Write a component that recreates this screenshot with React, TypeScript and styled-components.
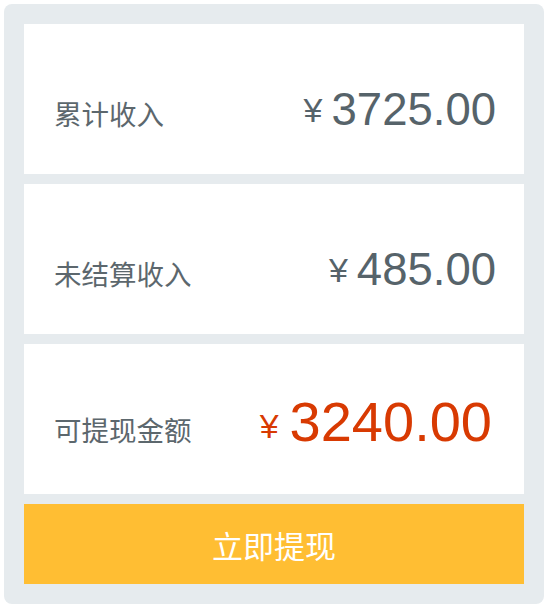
import styled, { createGlobalStyle } from 'styled-components'

const GlobalStyle = createGlobalStyle`
  html, body {
    margin: 0;
    padding: 0;
    background: #ffffff;
  }
  body {
    font-family: "Liberation Sans", "Noto Sans CJK SC", sans-serif;
  }
`

const incomes = [
  { label: '累计收入', amount: '3725.00' },
  { label: '未结算收入', amount: '485.00' },
  { label: '可提现金额', amount: '3240.00', highlight: true },
]

const App = () => {
  return (
    <>
      <GlobalStyle />
      <Wrapper>
        <Panel>
          {incomes.map((item) => (
            <Card key={item.label} $highlight={item.highlight}>
              <Label>{item.label}</Label>
              <Amount $highlight={item.highlight}>
                <Yen $highlight={item.highlight}>¥</Yen>
                {item.amount}
              </Amount>
            </Card>
          ))}
          <WithdrawButton type="button">立即提现</WithdrawButton>
        </Panel>
      </Wrapper>
    </>
  )
}

const Wrapper = styled.main`
  padding: 4px;
`

const Panel = styled.section`
  width: 540px;
  box-sizing: border-box;
  padding: 20px;
  background: #e6ebee;
  border-radius: 8px;
  display: flex;
  flex-direction: column;
  gap: 10px;
`

// 大号金额会把基线往下推，所以高亮卡片的上边距收一点
const Card = styled.div<{ $highlight?: boolean }>`
  height: 150px;
  box-sizing: border-box;
  background: #ffffff;
  padding: ${(p) => (p.$highlight ? '58px' : '66px')} 28px 0 30px;
  display: flex;
  align-items: baseline;
  justify-content: space-between;
`

const Label = styled.span`
  font-family: "Noto Sans CJK SC", sans-serif;
  font-size: 27.5px;
  line-height: 40px;
  color: #5c676d;
`

const Amount = styled.span<{ $highlight?: boolean }>`
  font-family: "Liberation Sans", sans-serif;
  font-size: ${(p) => (p.$highlight ? '56px' : '45.5px')};
  line-height: 40px;
  color: ${(p) => (p.$highlight ? '#d83a02' : '#56636a')};
  margin-right: ${(p) => (p.$highlight ? '4px' : '0')};
  display: flex;
  align-items: baseline;
`

const Yen = styled.span<{ $highlight?: boolean }>`
  font-size: 34px;
  margin-right: ${(p) => (p.$highlight ? '11px' : '9px')};
  position: relative;
  top: -3px;
`

const WithdrawButton = styled.button`
  height: 80px;
  border: none;
  background: #ffbe33;
  color: #ffffff;
  font-family: "Noto Sans CJK SC", sans-serif;
  font-size: 31px;
  cursor: pointer;
  padding: 0;
`

export default App
